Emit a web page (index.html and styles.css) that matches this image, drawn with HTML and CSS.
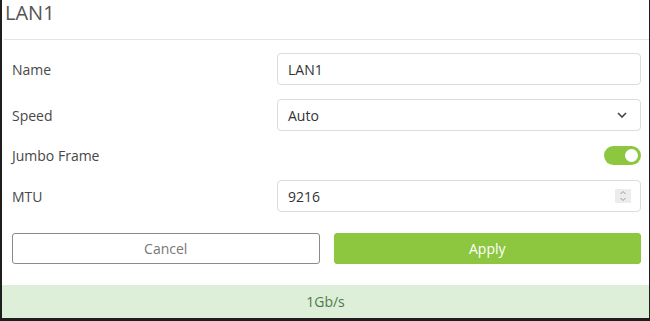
FILE: index.html
```html
<!DOCTYPE html>
<html lang="en">
<head>
    <meta charset="UTF-8">
    <meta name="viewport" content="width=device-width, initial-scale=1.0">
    <title>LAN1 Settings</title>
    <link rel="stylesheet" href="styles.css">
</head>
<body>
    <div class="panel">
        <header class="header">
            <h1>LAN1</h1>
        </header>

        <main class="form">
            <!-- Name -->
            <div class="row">
                <label class="label">Name</label>
                <div class="field">LAN1</div>
            </div>

            <!-- Speed -->
            <div class="row">
                <label class="label">Speed</label>
                <div class="field select">
                    <span>Auto</span>
                    <svg class="chevron" viewBox="0 0 10 6">
                        <path d="M1 1l4 4 4-4"></path>
                    </svg>
                </div>
            </div>

            <!-- Jumbo Frame -->
            <div class="row row-small">
                <label class="label">Jumbo Frame</label>
                <div class="toggle-wrap">
                    <div class="toggle on"><span class="knob"></span></div>
                </div>
            </div>

            <!-- MTU -->
            <div class="row">
                <label class="label">MTU</label>
                <div class="field number">
                    <span>9216</span>
                    <svg class="spinner" viewBox="0 0 16 14">
                        <rect width="16" height="14"></rect>
                        <path d="M5.5 5l2.5-2.5 2.5 2.5M5.5 9l2.5 2.5 2.5-2.5"></path>
                    </svg>
                </div>
            </div>

            <div class="actions">
                <button class="btn btn-cancel">Cancel</button>
                <button class="btn btn-apply">Apply</button>
            </div>
        </main>

        <footer class="status-bar">1Gb/s</footer>
    </div>
</body>
</html>
```

FILE: styles.css
```css
/* styles.css */
body {
    margin: 0;
    background: #1e1e1e;
    font-family: 'Open Sans', 'Noto Sans', sans-serif;
    color: #444;
}

.panel {
    background: #fff;
    margin: 0 1px 3px 2px;
    height: 318px;
    display: flex;
    flex-direction: column;
}

.header {
    margin-left: 2px;
    padding: 0 0 14px 1px;
    border-bottom: 1px solid #e3e3e3;
}

.header h1 {
    margin: 0;
    font-size: 20px;
    line-height: 25px;
    font-weight: 400;
    color: #555;
}

.form {
    padding: 13px 8px 0 10px;
    flex: 1;
}

.row {
    display: grid;
    grid-template-columns: 265px 1fr;
    align-items: center;
    height: 32px;
    margin-bottom: 14px;
}

.row-small {
    height: 21px;
}

.label {
    font-size: 14px;
    color: #474747;
}

.field {
    box-sizing: border-box;
    height: 32px;
    border: 1px solid #dcdcdf;
    border-radius: 4px;
    padding: 0 10px;
    font-size: 14px;
    color: #333;
    display: flex;
    align-items: center;
    justify-content: space-between;
}

.chevron {
    width: 10px;
    height: 6px;
    margin-right: 3px;
    fill: none;
    stroke: #444;
    stroke-width: 1.6;
}

.spinner {
    width: 16px;
    height: 14px;
    margin-right: -1px;
}

.spinner rect {
    fill: #ececee;
}

.spinner path {
    fill: none;
    stroke: #999;
    stroke-width: 1;
}

.toggle-wrap {
    display: flex;
    justify-content: flex-end;
}

.toggle {
    width: 37px;
    height: 19px;
    border-radius: 10px;
    background: #ccc;
    position: relative;
}

.toggle.on {
    background: #8dc63f;
}

.knob {
    position: absolute;
    top: 3px;
    right: 3px;
    width: 13px;
    height: 13px;
    border-radius: 50%;
    background: #fff;
}

.actions {
    display: grid;
    grid-template-columns: 1fr 1fr;
    gap: 14px;
    margin-top: 21px;
}

.btn {
    height: 31px;
    border-radius: 3px;
    font-family: 'Open Sans', 'Noto Sans', sans-serif;
    font-size: 14px;
    cursor: pointer;
}

.btn-cancel {
    background: #fff;
    border: 1px solid #8a8a8a;
    color: #777;
}

.btn-apply {
    background: #8dc63f;
    border: 1px solid #8dc63f;
    color: #fff;
}

.status-bar {
    height: 33px;
    line-height: 34px;
    text-align: center;
    background: #ddefd8;
    color: #4e7a4b;
    font-size: 14px;
}
```
